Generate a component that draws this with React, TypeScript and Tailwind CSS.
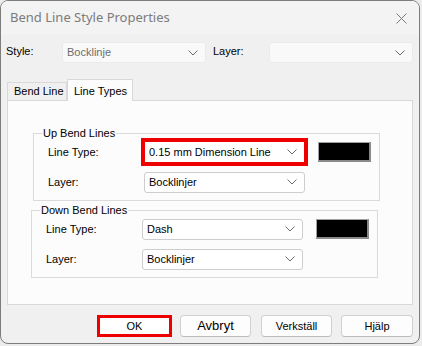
import React from 'react';
import clsx from 'clsx';

const sans = "font-['Liberation_Sans',Arial,sans-serif]";

function Chevron() {
  return (
    <svg width="10" height="6" viewBox="0 0 10 6" className="shrink-0">
      <path d="M0.5 0.5 L5 5 L9.5 0.5" fill="none" stroke="#6b6b6b" strokeWidth="1" />
    </svg>
  );
}

function Combo({ value, className, disabled }: { value: string; className?: string; disabled?: boolean }) {
  return (
    <div
      className={clsx(
        'flex items-center justify-between h-[21px] rounded-[3px] border pl-[4px] pr-[7px] text-[11px]',
        disabled ? 'bg-[#f9f9f9] border-[#ebebeb] text-[#6d6d6d]' : 'bg-white border-[#cdcdcd] text-black',
        className
      )}
    >
      <span>{value}</span>
      <Chevron />
    </div>
  );
}

function Swatch() {
  return (
    <div className="ml-[13px] w-[53px] h-[20px] bg-black border border-[#a0a0a0] border-b-[2px] border-r-[2px] border-b-[#8a8a8a] border-r-[#8a8a8a]" />
  );
}

function Row({ label, value, swatch, highlight }: { label: string; value: string; swatch?: boolean; highlight?: boolean }) {
  return (
    <div className="flex items-center h-[22px]">
      <span className="w-[96px] text-[11px] text-black">{label}</span>
      <Combo
        value={value}
        className={clsx('w-[161px]', highlight && 'rounded-none outline-solid outline-[4px] outline-[#ee0000] -outline-offset-1 h-[22px]')}
      />
      {swatch && <Swatch />}
    </div>
  );
}

function Group({ title, className, children }: { title: string; className?: string; children: React.ReactNode }) {
  return (
    <fieldset className={clsx('w-[347px] border border-[#dadada] pl-[14px] pb-[7px]', className)}>
      <legend className="-ml-[6px] px-[1px] text-[11px] text-black leading-[13px]">{title}</legend>
      {children}
    </fieldset>
  );
}

function Button({ label, className }: { label: string; className?: string }) {
  return (
    <div
      className={clsx(
        'h-[22px] flex items-center justify-center rounded-[4px] border border-[#d0d0d0] border-b-[#bcbcbc] bg-[#fdfdfd] text-[11px] text-black',
        className
      )}
    >
      {label}
    </div>
  );
}

export default function App() {
  return (
    <div className={clsx('w-[422px] h-[346px] bg-[#ececec] overflow-hidden', sans)}>
      <div className="w-[420px] h-[344px] rounded-[8px] border border-[#7d7d7d] bg-[#f0f0f0] overflow-hidden flex flex-col">
        {/* Title bar */}
        <div className="h-[34px] bg-[#f3f3f3] flex items-center justify-between pl-[9px] pr-[12px]">
          <span className="font-['Noto_Sans',sans-serif] text-[13px] text-[#7b7b7b]">Bend Line Style Properties</span>
          <svg width="11" height="11" viewBox="0 0 11 11">
            <path d="M0.5 0.5 L10.5 10.5 M10.5 0.5 L0.5 10.5" stroke="#7a7a7a" strokeWidth="1" />
          </svg>
        </div>

        {/* Style / Layer */}
        <div className="flex items-start mt-[7px] pl-[5px]">
          <span className="w-[56px] text-[11px] text-black pt-[1px]">Style:</span>
          <Combo value="Bocklinje" disabled className="w-[144px] h-[20px]" />
          <span className="ml-[7px] w-[56px] text-[11px] text-black pt-[1px]">Layer:</span>
          <Combo value="" disabled className="w-[144px] h-[20px]" />
        </div>

        {/* Tabs */}
        <div className="flex items-end ml-[6px] mt-[16px] relative z-10">
          <div className="w-[60px] h-[18px] border border-b-0 border-[#d9d9d9] bg-[#f0f0f0] text-[11px] pl-[6px] flex items-center">
            Bend Line
          </div>
          <div className="w-[66px] h-[22px] -mb-px border border-b-0 border-[#d9d9d9] bg-[#fcfcfc] text-[11px] pl-[6px] pt-[3px]">
            Line Types
          </div>
        </div>

        {/* Tab panel */}
        <div className="ml-[6px] w-[406px] h-[205px] border border-[#d9d9d9] bg-[#fcfcfc] pt-[26px]">
          <Group title="Up Bend Lines" className="ml-[25px]">
            <div className="flex flex-col gap-[8px] pt-[1px]">
              <Row label="Line Type:" value="0.15 mm Dimension Line" swatch highlight />
              <Row label="Layer:" value="Bocklinjer" />
            </div>
          </Group>
          <Group title="Down Bend Lines" className="ml-[23px] mt-[3px]">
            <div className="flex flex-col gap-[8px] pt-[1px]">
              <Row label="Line Type:" value="Dash" swatch />
              <Row label="Layer:" value="Bocklinjer" />
            </div>
          </Group>
        </div>

        {/* Buttons */}
        <div className="flex mt-[10px] pl-[96px]">
          <Button label="OK" className="w-[75px] border-[3px] border-[#ee0000] border-b-[#ee0000] rounded-none bg-white" />
          <Button label="Avbryt" className="ml-[8px] w-[71px] text-[13px]" />
          <Button label="Verkställ" className="ml-[10px] w-[71px]" />
          <Button label="Hjälp" className="ml-[9px] w-[72px]" />
        </div>
      </div>
    </div>
  );
}
